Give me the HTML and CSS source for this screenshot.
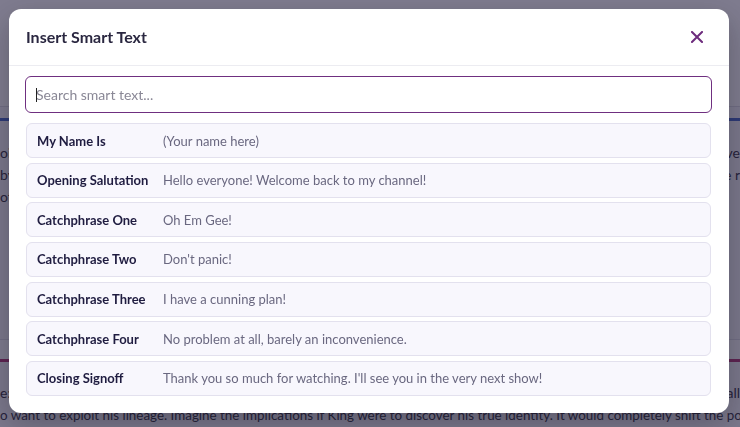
FILE: index.html
```html
<!DOCTYPE html>
<html lang="en">
<head>
<meta charset="utf-8">
<title>Insert Smart Text</title>
<link rel="stylesheet" href="styles.css">
</head>
<body>
<div class="page">
  <header class="page-header"></header>
  <div class="page-toolbar"></div>
  <section class="page-content">
    <p class="line"><span>oint</span><span>give</span></p>
    <p class="line"><span>by</span><span>the r</span></p>
    <p class="line"><span>of</span><span></span></p>
  </section>
  <div class="page-band"></div>
  <section class="page-notes">
    <p class="line"><span>e:</span><span>all</span></p>
    <p class="line small"><span>o want to exploit his lineage. Imagine the implications if King were to discover his true identity. It would completely shift the po</span></p>
  </section>
</div>

<div class="backdrop"></div>

<div class="modal" role="dialog" aria-labelledby="modal-title">
  <div class="modal-header">
    <h2 id="modal-title" class="modal-title">Insert Smart Text</h2>
    <button class="close-btn" aria-label="Close">
      <svg width="12" height="12" viewBox="0 0 12 12"><path d="M1 1 L11 11 M11 1 L1 11" stroke="currentColor" stroke-width="2" stroke-linecap="square" fill="none"/></svg>
    </button>
  </div>
  <div class="modal-body">
    <div class="search-wrap">
      <input class="search" type="text" placeholder="Search smart text...">
      <span class="caret"></span>
    </div>
    <ul class="items">
      <li class="item"><span class="item-label">My Name Is</span><span class="item-value">(Your name here)</span></li>
      <li class="item"><span class="item-label">Opening Salutation</span><span class="item-value">Hello everyone! Welcome back to my channel!</span></li>
      <li class="item"><span class="item-label">Catchphrase One</span><span class="item-value">Oh Em Gee!</span></li>
      <li class="item"><span class="item-label">Catchphrase Two</span><span class="item-value">Don't panic!</span></li>
      <li class="item"><span class="item-label">Catchphrase Three</span><span class="item-value">I have a cunning plan!</span></li>
      <li class="item"><span class="item-label">Catchphrase Four</span><span class="item-value">No problem at all, barely an inconvenience.</span></li>
      <li class="item"><span class="item-label">Closing Signoff</span><span class="item-value">Thank you so much for watching. I'll see you in the very next show!</span></li>
    </ul>
  </div>
</div>
</body>
</html>
```

FILE: styles.css
```css
* { box-sizing: border-box; }

html, body {
  margin: 0;
  padding: 0;
  height: 100%;
  overflow: hidden;
}

body {
  font-family: "Lato", "Noto Sans", "Liberation Sans", sans-serif;
  background: #f4f4f8;
  color: #2b2937;
}

/* Underlying page */
.page {
  width: 740px;
  height: 427px;
  display: flex;
  flex-direction: column;
}

.page-header {
  height: 107px;
  background: #ffffff;
  border-bottom: 1px solid #dcdce4;
  flex: none;
}

.page-toolbar {
  height: 14px;
  background: #f8f8fb;
  border-bottom: 3px solid #3f63c4;
  flex: none;
}

.page-content {
  padding-top: 21px;
  height: 218px;
  flex: none;
}

.line {
  margin: 0;
  display: flex;
  justify-content: space-between;
  white-space: nowrap;
  overflow: hidden;
  font-family: "Lato", "Noto Sans", sans-serif;
  font-size: 14px;
  line-height: 22px;
  color: #2f2d3a;
}

.line.small {
  font-size: 13.4px;
}

.page-band {
  height: 23px;
  background: #fbfbfd;
  border-top: 1px solid #dcdce4;
  border-bottom: 3px solid #b0306e;
  flex: none;
}

.page-notes {
  padding-top: 20px;
}

/* Overlay */
.backdrop {
  position: fixed;
  inset: 0;
  background: rgba(34, 30, 62, 0.58);
}

.modal {
  position: fixed;
  top: 9px;
  left: 9px;
  width: 720px;
  height: 404px;
  background: #ffffff;
  border-radius: 12px;
  box-shadow: 0 10px 30px rgba(0, 0, 0, 0.25);
  display: flex;
  flex-direction: column;
  font-family: "Lato", "Noto Sans", sans-serif;
}

.modal-header {
  height: 57px;
  flex: none;
  display: flex;
  align-items: center;
  justify-content: space-between;
  padding: 0 26px 0 17px;
  border-bottom: 1px solid #ececf1;
}

.modal-title {
  margin: 0;
  font-size: 16px;
  font-weight: 700;
  color: #2a2740;
  position: relative;
  top: -1px;
}

.close-btn {
  border: 0;
  background: none;
  padding: 0;
  width: 12px;
  height: 12px;
  color: #6d2c7d;
  display: flex;
  cursor: pointer;
}

.modal-body {
  padding: 10px 17px 0 16px;
}

.search-wrap {
  position: relative;
}

.search {
  display: block;
  width: 100%;
  height: 37px;
  border: 1px solid #6f2f80;
  border-radius: 6px;
  padding: 0 10px;
  font-family: inherit;
  font-size: 14px;
  color: #2a2740;
  outline: none;
}

.search::placeholder {
  color: #8a8896;
}

.caret {
  position: absolute;
  left: 11px;
  top: 12px;
  width: 1px;
  height: 14px;
  background: #222;
}

.items {
  list-style: none;
  margin: 10px 1px 0;
  padding: 0;
  display: flex;
  flex-direction: column;
  gap: 4.67px;
}

.item {
  height: 35px;
  display: flex;
  align-items: center;
  padding: 0 10px;
  background: #f8f7fd;
  border: 1px solid #e3e1ee;
  border-radius: 6px;
  font-size: 13px;
}

.item-label {
  flex: 0 0 126px;
  font-weight: 700;
  color: #1f1c40;
}

.item-value {
  color: #6a6880;
}
```
